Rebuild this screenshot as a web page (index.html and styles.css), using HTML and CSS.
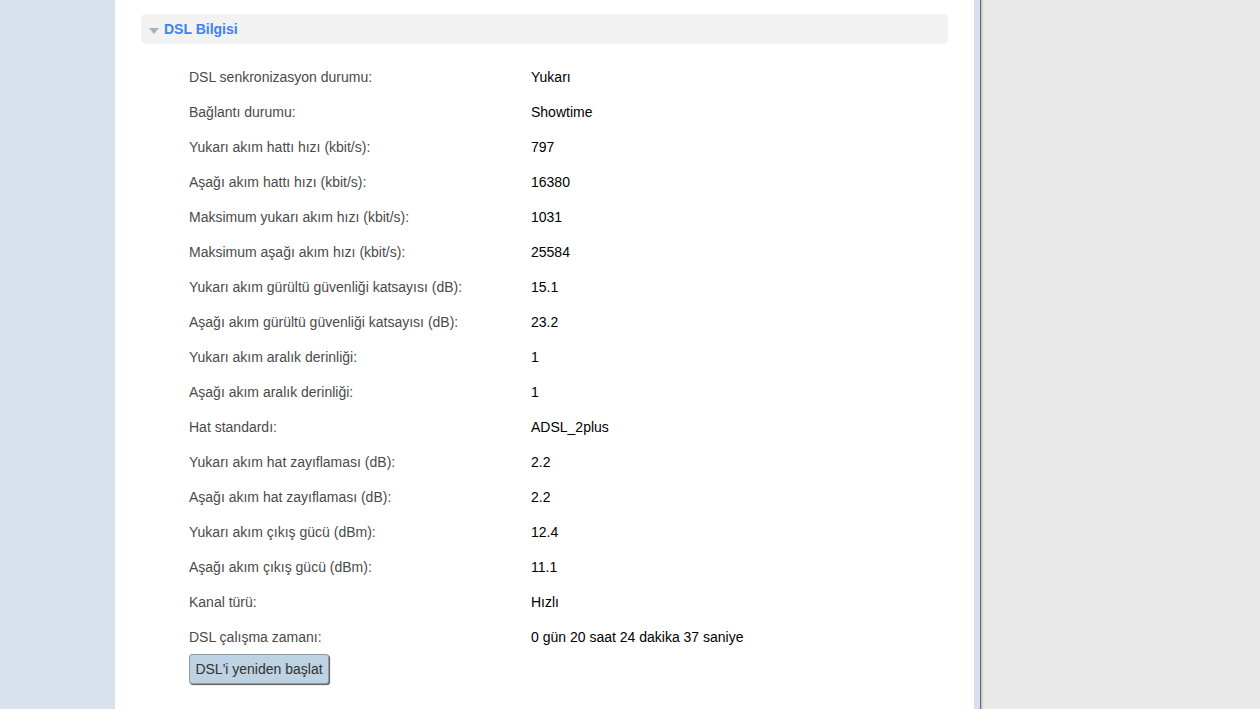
FILE: index.html
```html
<!DOCTYPE html>
<html>
<head>
<meta charset="utf-8">
<link rel="stylesheet" href="styles.css">
</head>
<body>
<div class="page">
  <div class="left-bg"></div>
  <div class="panel">
    <div class="section-head">
      <span class="caret"></span>
      <span class="section-title">DSL Bilgisi</span>
    </div>
    <div class="info">
      <div class="row"><span class="label">DSL senkronizasyon durumu:</span><span class="value">Yukarı</span></div>
      <div class="row"><span class="label">Bağlantı durumu:</span><span class="value">Showtime</span></div>
      <div class="row"><span class="label">Yukarı akım hattı hızı (kbit/s):</span><span class="value">797</span></div>
      <div class="row"><span class="label">Aşağı akım hattı hızı (kbit/s):</span><span class="value">16380</span></div>
      <div class="row"><span class="label">Maksimum yukarı akım hızı (kbit/s):</span><span class="value">1031</span></div>
      <div class="row"><span class="label">Maksimum aşağı akım hızı (kbit/s):</span><span class="value">25584</span></div>
      <div class="row"><span class="label">Yukarı akım gürültü güvenliği katsayısı (dB):</span><span class="value">15.1</span></div>
      <div class="row"><span class="label">Aşağı akım gürültü güvenliği katsayısı (dB):</span><span class="value">23.2</span></div>
      <div class="row"><span class="label">Yukarı akım aralık derinliği:</span><span class="value">1</span></div>
      <div class="row"><span class="label">Aşağı akım aralık derinliği:</span><span class="value">1</span></div>
      <div class="row"><span class="label">Hat standardı:</span><span class="value">ADSL_2plus</span></div>
      <div class="row"><span class="label">Yukarı akım hat zayıflaması (dB):</span><span class="value">2.2</span></div>
      <div class="row"><span class="label">Aşağı akım hat zayıflaması (dB):</span><span class="value">2.2</span></div>
      <div class="row"><span class="label">Yukarı akım çıkış gücü (dBm):</span><span class="value">12.4</span></div>
      <div class="row"><span class="label">Aşağı akım çıkış gücü (dBm):</span><span class="value">11.1</span></div>
      <div class="row"><span class="label">Kanal türü:</span><span class="value">Hızlı</span></div>
      <div class="row"><span class="label">DSL çalışma zamanı:</span><span class="value">0 gün 20 saat 24 dakika 37 saniye</span></div>
    </div>
    <div class="actions">
      <button class="btn" type="button">DSL'i yeniden başlat</button>
    </div>
  </div>
  <div class="edge-strip"></div>
  <div class="edge-line"></div>
  <div class="right-bg"></div>
</div>
</body>
</html>
```

FILE: styles.css
```css
html, body {
  margin: 0;
  padding: 0;
  height: 100%;
  overflow: hidden;
}
body {
  font-family: "Liberation Sans", Arial, sans-serif;
  font-size: 14px;
}
.page {
  display: flex;
  height: 709px;
}
.left-bg {
  width: 115px;
  flex: none;
  background: #d9e1ec;
}
.panel {
  width: 859px;
  flex: none;
  background: #ffffff;
  padding: 14px 26px 0 26px;
  box-sizing: border-box;
}
.section-head {
  height: 30px;
  background: #f2f2f2;
  border-radius: 5px;
  display: flex;
  align-items: center;
  padding-left: 8px;
}
.caret {
  width: 0;
  height: 0;
  border-left: 5px solid transparent;
  border-right: 5px solid transparent;
  border-top: 6px solid #a3b3bd;
  margin-top: 3px;
  margin-right: 5px;
}
.section-title {
  color: #3b82f6;
  font-weight: bold;
  font-size: 14px;
}
.info {
  margin-top: 15px;
  padding-left: 48px;
}
.row {
  display: flex;
  height: 35px;
  align-items: center;
}
.label {
  width: 342px;
  color: #4a4a4a;
}
.value {
  color: #000000;
}
.actions {
  padding-left: 48px;
}
.btn {
  font-family: "Liberation Sans", Arial, sans-serif;
  font-size: 14px;
  color: #333333;
  background: #bdd2e2;
  border: 1px solid #8f9aa3;
  border-radius: 3px;
  box-shadow: 1px 1px 1px #555;
  height: 30px;
  width: 140px;
  padding: 0;
  margin: 0;
}
.edge-strip {
  width: 6px;
  flex: none;
  background: #d6dfea;
}
.edge-line {
  width: 4px;
  flex: none;
  background: linear-gradient(to right, #6b6b6b 0, #6b6b6b 1px, #b5b5b5 1px, #d0d0d0 2px, #e0e0e0 3px, #e6e6e6 4px);
}
.right-bg {
  flex: 1;
  background: #e9e9e9;
}
```
